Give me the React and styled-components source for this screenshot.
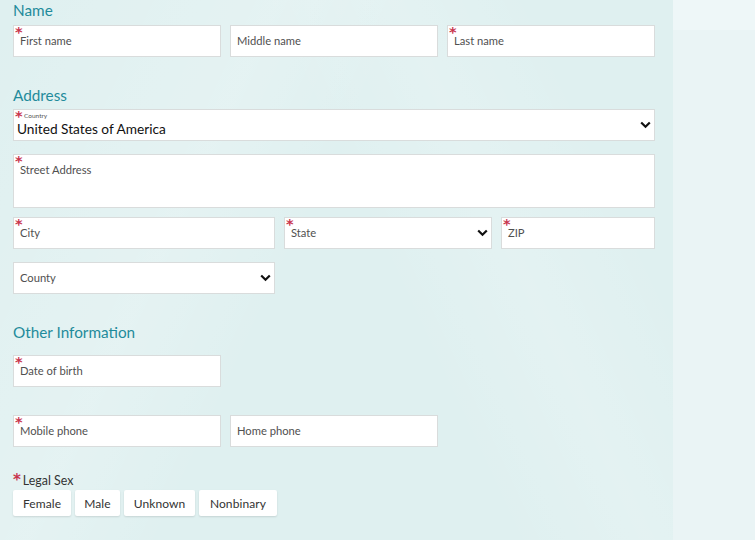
import React from "react";
import styled, { createGlobalStyle } from "styled-components";

const Global = createGlobalStyle`
  html, body { margin: 0; padding: 0; }
  body {
    background: #ecf5f6;
    font-family: Lato, "Open Sans", "Liberation Sans", sans-serif;
  }
`;

const Page = styled.div`
  display: flex;
  min-height: 540px;
  width: 755px;
  overflow: hidden;
`;

const Panel = styled.main`
  width: 673px;
  flex: none;
  box-sizing: border-box;
  padding: 0 18px 0 13px;
  background:
    linear-gradient(115deg, rgba(255,255,255,0) 0%, rgba(255,255,255,0.18) 30%, rgba(255,255,255,0) 45%),
    linear-gradient(65deg, rgba(255,255,255,0) 55%, rgba(255,255,255,0.15) 70%, rgba(255,255,255,0) 85%),
    #dff0f0;
`;

const Aside = styled.div`
  flex: 1;
  background: linear-gradient(#eef7f8 0, #eef7f8 30px, #eaf4f5 30px);
`;

const Heading = styled.h2`
  margin: ${(p) => p.$top || 0}px 0 ${(p) => p.$bottom || 5}px;
  font-size: 15.3px;
  line-height: 20px;
  font-weight: 400;
  color: #1f8b9b;
`;

const Row = styled.div`
  display: flex;
  gap: 9px;
  margin-bottom: ${(p) => p.$bottom || 0}px;
`;

const Field = styled.div`
  position: relative;
  box-sizing: border-box;
  width: ${(p) => (p.$w ? `${p.$w}px` : "auto")};
  flex: ${(p) => (p.$w ? "none" : "1")};
  height: ${(p) => p.$h || 32}px;
  background: #fff;
  border: 1px solid #d9dcdc;
  display: flex;
  align-items: ${(p) => (p.$top ? "flex-start" : "center")};
  padding: ${(p) => (p.$top ? "8px 6px 0 6px" : "0 6px 1px")};
  font-size: 11.2px;
  color: #505050;
`;

const Star = styled.span`
  position: absolute;
  left: 1px;
  top: -1px;
  color: #c8344d;
  font-size: 17px;
  line-height: 17px;
  font-family: "DejaVu Sans", sans-serif;
  font-weight: 700;
  transform: scale(0.85);
  transform-origin: top left;
`;

const Placeholder = styled.span`
  flex: 1;
  white-space: nowrap;
`;

const Chevron = () => (
  <svg width="11" height="8" viewBox="0 0 11 8" style={{ flex: "none" }}>
    <path d="M1.2 1.5 L5.5 5.8 L9.8 1.5" fill="none" stroke="#111" strokeWidth="2.2" />
  </svg>
);

const SelectBox = styled(Field)`
  padding: 0 3px 1px 6px;
`;

const CountryBox = styled(Field)`
  padding: 0 3px 0 3px;
`;

const CountryText = styled.div`
  flex: 1;
  display: flex;
  flex-direction: column;
`;

const Tiny = styled.span`
  font-size: 6.5px;
  line-height: 7px;
  color: #555;
  margin-left: 7px;
  margin-top: -2px;
`;

const Value = styled.span`
  font-size: 13.7px;
  line-height: 16px;
  color: #111;
  margin-top: 2px;
`;

const SexLabel = styled.div`
  display: flex;
  align-items: flex-start;
  font-size: 12.4px;
  line-height: 14px;
  color: #333;
  margin-bottom: 2px;
`;

const SmallStar = styled.span`
  color: #c8344d;
  font-size: 15px;
  line-height: 13px;
  font-weight: 700;
  font-family: "DejaVu Sans", sans-serif;
  margin-right: 2px;
`;

const Buttons = styled.div`
  display: flex;
  gap: 4px;
`;

const Choice = styled.button`
  height: 26px;
  padding: 0 ${(p) => p.$pad || 10}px;
  background: #fff;
  border: none;
  border-radius: 2px;
  box-shadow: 0 1px 2px rgba(0, 0, 0, 0.12);
  font-family: inherit;
  font-size: 12px;
  color: #333;
  letter-spacing: 0.1px;
`;

const Text = ({ label, req, w, h, top }) => (
  <Field $w={w} $h={h} $top={top}>
    {req && <Star>*</Star>}
    <Placeholder>{label}</Placeholder>
  </Field>
);

const Select = ({ label, req, w }) => (
  <SelectBox $w={w}>
    {req && <Star>*</Star>}
    <Placeholder>{label}</Placeholder>
    <Chevron />
  </SelectBox>
);

export default function App() {
  return (
    <>
      <Global />
      <Page>
        <Panel>
          <Heading $bottom={5}>Name</Heading>
          <Row>
            <Text label="First name" req w={208} />
            <Text label="Middle name" w={208} />
            <Text label="Last name" req w={208} />
          </Row>

          <Heading $top={28} $bottom={4}>Address</Heading>
          <Row $bottom={13}>
            <CountryBox>
              <Star>*</Star>
              <CountryText>
                <Tiny>Country</Tiny>
                <Value>United States of America</Value>
              </CountryText>
              <Chevron />
            </CountryBox>
          </Row>
          <Row $bottom={9}>
            <Text label="Street Address" req h={54} top />
          </Row>
          <Row $bottom={13}>
            <Text label="City" req w={262} />
            <Select label="State" req w={208} />
            <Text label="ZIP" req />
          </Row>
          <Row>
            <Select label="County" w={262} />
          </Row>

          <Heading $top={28} $bottom={13}>Other Information</Heading>
          <Row $bottom={28}>
            <Text label="Date of birth" req w={208} />
          </Row>
          <Row $bottom={27}>
            <Text label="Mobile phone" req w={208} />
            <Text label="Home phone" w={208} />
          </Row>

          <SexLabel>
            <SmallStar>*</SmallStar>
            Legal Sex
          </SexLabel>
          <Buttons>
            <Choice>Female</Choice>
            <Choice $pad={9}>Male</Choice>
            <Choice $pad={10}>Unknown</Choice>
            <Choice $pad={10.5}>Nonbinary</Choice>
          </Buttons>
        </Panel>
        <Aside />
      </Page>
    </>
  );
}
